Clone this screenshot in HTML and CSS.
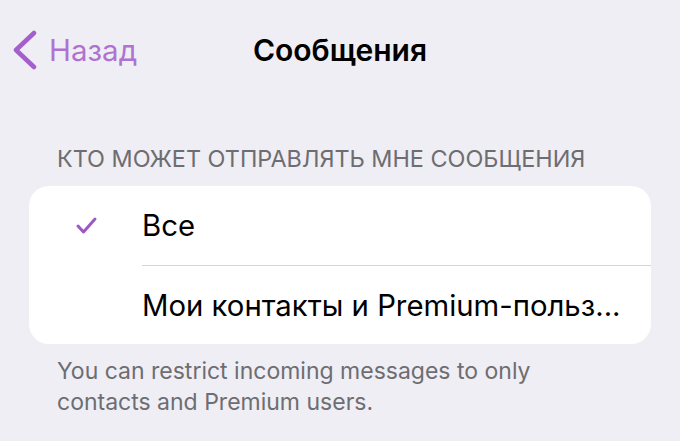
FILE: index.html
```html
<!DOCTYPE html>
<html lang="ru">
<head>
  <meta charset="UTF-8" />
  <title>Сообщения</title>
  <link rel="stylesheet" href="styles.css">
</head>
<body>
  <div class="navbar">
    <a class="back" href="#">
      <svg class="chevron" width="26" height="40" viewBox="0 0 26 40">
        <path d="M22 3 L4 20 L22 37" fill="none" stroke="currentColor" stroke-width="4.5" stroke-linecap="round" stroke-linejoin="round"/>
      </svg>
      <span>Назад</span>
    </a>
    <div class="title">Сообщения</div>
    <div></div>
  </div>

  <div class="section-header">КТО МОЖЕТ ОТПРАВЛЯТЬ МНЕ СООБЩЕНИЯ</div>

  <div class="card">
    <div class="row">
      <div class="check">
        <svg width="24" height="20" viewBox="0 0 24 20">
          <path d="M3 10 L8.5 16 L20 3" fill="none" stroke="currentColor" stroke-width="3" stroke-linecap="round" stroke-linejoin="round"/>
        </svg>
      </div>
      <div class="label">Все</div>
    </div>
    <div class="row">
      <div class="check"></div>
      <div class="label">Мои контакты и Premium-польз...</div>
    </div>
  </div>

  <p class="footer">You can restrict incoming messages to only contacts and Premium users.</p>
</body>
</html>
```

FILE: styles.css
```css
body {
  margin: 0;
  background-color: #efeef4;
  font-family: Inter, Roboto, sans-serif;
  color: #000;
}
.navbar {
  display: grid;
  grid-template-columns: 1fr auto 1fr;
  align-items: center;
  height: 100px;
}
.back {
  display: flex;
  align-items: center;
  gap: 11px;
  padding-left: 12px;
  color: #b072d1;
  text-decoration: none;
  font-size: 29.5px;
}
.chevron {
  color: #a55fcb;
}
.title {
  font-size: 30px;
  font-weight: 600;
}
.section-header {
  margin-top: 44px;
  padding-left: 57px;
  font-size: 23.4px;
  color: #6d6d72;
}
.card {
  margin: 13px 29px 0 29px;
  background: white;
  border-radius: 20px;
  overflow: hidden;
}
.row {
  display: flex;
  align-items: center;
  height: 79px;
}
.row + .row .label {
  border-top: 1px solid #d4d4d8;
}
.check {
  width: 113px;
  display: flex;
  justify-content: center;
  padding-left: 2px;
  box-sizing: border-box;
  color: #9d58c6;
}
.label {
  flex: 1;
  align-self: stretch;
  display: flex;
  align-items: center;
  font-size: 29.3px;
}
.footer {
  margin: 12px 0 0 0;
  padding: 0 100px 0 57px;
  font-size: 23px;
  line-height: 31px;
  color: #6d6d72;
}
```
